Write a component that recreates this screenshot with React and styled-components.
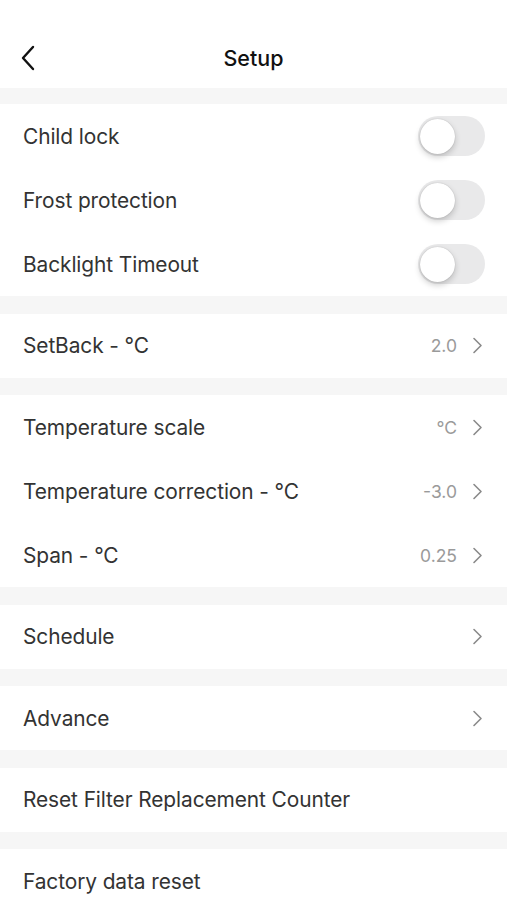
import React from "react";
import styled, { createGlobalStyle } from "styled-components";

const Global = createGlobalStyle`
  html, body { margin: 0; padding: 0; background: #f6f6f6; }
  body { font-family: Inter, "Noto Sans", "Liberation Sans", sans-serif; -webkit-font-smoothing: antialiased; }
`;

const Page = styled.div`
  width: 507px;
  min-height: 900px;
  background: #f6f6f6;
  display: flex;
  flex-direction: column;
  gap: 17.5px;
`;

const Header = styled.header`
  height: 88px;
  box-sizing: border-box;
  padding-top: 28px;
  background: #fff;
  display: grid;
  grid-template-columns: 60px 1fr 60px;
  align-items: center;
  margin-bottom: -1.5px;
`;

const Back = styled.div`
  padding-left: 20px;
  display: flex;
  align-items: center;
`;

const Title = styled.h1`
  margin: 0;
  text-align: center;
  font-size: 21.5px;
  font-weight: 500;
  color: #111;
`;

const Section = styled.section`
  background: #fff;
  display: flex;
  flex-direction: column;
`;

const Row = styled.div`
  height: 64px;
  display: flex;
  align-items: center;
  justify-content: space-between;
  padding: 0 23px;
`;

const Label = styled.span`
  font-size: 20.9px;
  color: #333;
  letter-spacing: -0.1px;
`;

const Right = styled.div`
  display: flex;
  align-items: center;
  gap: 15px;
`;

const Value = styled.span`
  font-size: 17.5px;
  color: #9a9a9a;
`;

const Track = styled.div`
  width: 67px;
  height: 40px;
  border-radius: 20px;
  background: #e9e9ea;
  position: relative;
  margin-right: -1px;
`;

const Knob = styled.div`
  position: absolute;
  left: 2px;
  top: 2.5px;
  width: 35px;
  height: 35px;
  border-radius: 50%;
  background: #fff;
  box-shadow: 0 3px 6px rgba(0,0,0,0.2), 0 0 1px rgba(0,0,0,0.25);
`;

const Chevron = () => (
  <svg width="11" height="17" viewBox="0 0 11 17" fill="none" style={{ marginRight: 1 }}>
    <path d="M2 1.5 L9 8.5 L2 15.5" stroke="#8a8a8a" strokeWidth="1.6" strokeLinecap="round" strokeLinejoin="round" />
  </svg>
);

const Toggle = () => (
  <Track>
    <Knob />
  </Track>
);

export default function App() {
  return (
    <Page>
      <Global />
      <Header>
        <Back>
          <svg width="16" height="26" viewBox="0 0 16 26" fill="none">
            <path d="M13 2 L3 13 L13 24" stroke="#111" strokeWidth="2.4" strokeLinecap="round" strokeLinejoin="round" />
          </svg>
        </Back>
        <Title>Setup</Title>
        <div />
      </Header>
      <Section>
        <Row><Label>Child lock</Label><Toggle /></Row>
        <Row><Label>Frost protection</Label><Toggle /></Row>
        <Row><Label>Backlight Timeout</Label><Toggle /></Row>
      </Section>
      <Section>
        <Row><Label>SetBack - °C</Label><Right><Value>2.0</Value><Chevron /></Right></Row>
      </Section>
      <Section>
        <Row><Label>Temperature scale</Label><Right><Value>°C</Value><Chevron /></Right></Row>
        <Row><Label>Temperature correction - °C</Label><Right><Value>-3.0</Value><Chevron /></Right></Row>
        <Row><Label>Span - °C</Label><Right><Value>0.25</Value><Chevron /></Right></Row>
      </Section>
      <Section>
        <Row><Label>Schedule</Label><Right><Chevron /></Right></Row>
      </Section>
      <Section>
        <Row><Label>Advance</Label><Right><Chevron /></Right></Row>
      </Section>
      <Section>
        <Row><Label>Reset Filter Replacement Counter</Label></Row>
      </Section>
      <Section>
        <Row><Label>Factory data reset</Label></Row>
      </Section>
    </Page>
  );
}
